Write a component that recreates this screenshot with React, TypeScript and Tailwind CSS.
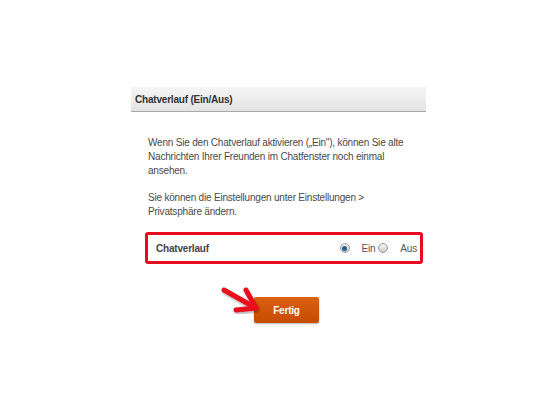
import React from "react";

// Chat history toggle dialog (Ein/Aus) with highlighted option row.
function Radio({ checked }: { checked?: boolean }) {
  return (
    <span className="flex h-[10px] w-[10px] shrink-0 items-center justify-center rounded-full border border-[#9a9a9a] bg-gradient-to-b from-[#f4f4f4] to-[#cfcfcf]">
      {checked && <span className="h-[5px] w-[5px] rounded-full bg-[#1f5f8f]" />}
    </span>
  );
}

function Arrow() {
  return (
    <svg width="48" height="32" viewBox="0 0 48 32" className="absolute left-[-34px] top-[-12px]">
      <defs>
        <filter id="sh" x="-20%" y="-20%" width="140%" height="140%">
          <feDropShadow dx="1" dy="2" stdDeviation="1.2" floodColor="#000" floodOpacity="0.3" />
        </filter>
      </defs>
      <g filter="url(#sh)" stroke="#ea0a1e" strokeWidth="5" strokeLinecap="round" strokeLinejoin="round" fill="none">
        <path d="M4 5 L34 22" />
        <path d="M26 5 L36 23 L16 25" />
      </g>
    </svg>
  );
}

export default function App() {
  return (
    <div className="min-h-[418px] w-[557px] bg-white pt-[87px] font-['Liberation_Sans',Arial,sans-serif] tracking-[-0.2px]">
      <div className="ml-[131px] w-[295px]">
        <div className="flex h-[25px] items-center border-b border-[#a9a9a9] bg-gradient-to-b from-[#f5f5f5] to-[#e4e4e4] pl-[4px] text-[10px] font-bold text-[#333]">
          Chatverlauf (Ein/Aus)
        </div>
        <div className="ml-[17px] mt-[24px] w-[268px] text-[10px] leading-[14px] text-[#4a4a4a]">
          <p>Wenn Sie den Chatverlauf aktivieren („Ein"), können Sie alte Nachrichten Ihrer Freunden im Chatfenster noch einmal ansehen.</p>
          <p className="mt-[13px]">Sie können die Einstellungen unter Einstellungen &gt; Privatsphäre ändern.</p>
        </div>
        <div className="ml-[14px] mt-[13px] flex h-[32px] w-[278px] items-center rounded-[3px] border-[3px] border-[#ea0a1e] bg-white pl-[8px] pr-[3px] text-[10px] text-[#555]">
          <span className="font-bold text-[#444]">Chatverlauf</span>
          <div className="ml-auto flex items-center">
            <Radio checked />
            <span className="ml-[12px]">Ein</span>
            <span className="ml-[3px]"><Radio /></span>
            <span className="ml-[12px]">Aus</span>
          </div>
        </div>
        <div className="relative ml-[123px] mt-[33px] w-[65px]">
          <Arrow />
          <button className="flex h-[26px] w-[65px] items-center justify-center rounded-[2px] bg-gradient-to-b from-[#dc6010] to-[#c64b00] text-[10px] font-bold text-white shadow-[0_1px_2px_rgba(0,0,0,0.3)]">
            Fertig
          </button>
        </div>
      </div>
    </div>
  );
}
